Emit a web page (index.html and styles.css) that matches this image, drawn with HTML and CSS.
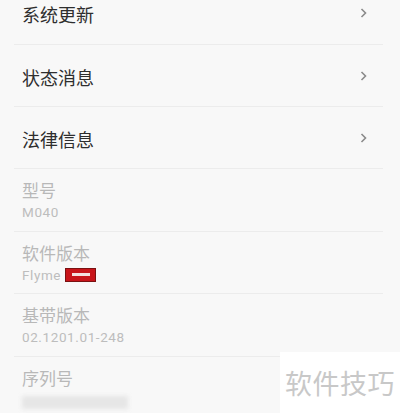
FILE: index.html
```html
<!DOCTYPE html>
<html lang="zh-CN">
<head>
<meta charset="utf-8">
<link rel="stylesheet" href="styles.css">
</head>
<body>
<div class="screen">
  <ul class="list">
    <li class="nav-row first"><span class="nav-title">系统更新</span><svg class="chev" width="7" height="10" viewBox="0 0 7 10"><path d="M1.5 1 L5.5 5 L1.5 9" fill="none" stroke="#8a8a8a" stroke-width="1.6"/></svg></li>
    <li class="nav-row"><span class="nav-title">状态消息</span><svg class="chev" width="7" height="10" viewBox="0 0 7 10"><path d="M1.5 1 L5.5 5 L1.5 9" fill="none" stroke="#8a8a8a" stroke-width="1.6"/></svg></li>
    <li class="nav-row"><span class="nav-title">法律信息</span><svg class="chev" width="7" height="10" viewBox="0 0 7 10"><path d="M1.5 1 L5.5 5 L1.5 9" fill="none" stroke="#8a8a8a" stroke-width="1.6"/></svg></li>
    <li class="info-row"><div class="info-title">型号</div><div class="info-value">M040</div></li>
    <li class="info-row"><div class="info-title">软件版本</div><div class="info-value">Flyme <span class="redact"><span class="redact-bar"></span></span></div></li>
    <li class="info-row"><div class="info-title">基带版本</div><div class="info-value">02.1201.01-248</div></li>
    <li class="info-row last"><div class="info-title">序列号</div><div class="info-value"><span class="blur"></span></div></li>
  </ul>
  <div class="watermark">软件技巧</div>
</div>
</body>
</html>
```
FILE: styles.css
```css
html, body {
  margin: 0;
  padding: 0;
  background: #f8f8f8;
}
.screen {
  position: relative;
  width: 400px;
  height: 413px;
  overflow: hidden;
  font-family: "Noto Sans CJK SC", "Noto Sans", Roboto, sans-serif;
}
.list {
  list-style: none;
  margin: 0;
  padding: 0 17px 0 14px;
}
.nav-row {
  display: flex;
  align-items: center;
  justify-content: space-between;
  height: 62px;
  padding: 0 16px 0 8px;
  border-bottom: 1px solid #ececec;
  box-sizing: border-box;
}
.nav-row.first {
  margin-top: -18px;
  height: 63px;
}
.nav-title {
  font-size: 18px;
  line-height: 24px;
  color: #2e2e2e;
  padding-top: 2px;
}
.chev {
  display: block;
}
.info-row {
  height: 62.5px;
  padding: 10px 0 0 8px;
  box-sizing: border-box;
  border-bottom: 1px solid #ececec;
}
.info-row.last {
  border-bottom: none;
}
.info-title {
  font-size: 17px;
  line-height: 22px;
  color: #b8b8b8;
}
.info-value {
  margin-top: 1px;
  font-family: Roboto, "Noto Sans", sans-serif;
  font-size: 13.5px;
  letter-spacing: 0.6px;
  line-height: 20px;
  color: #bdbdbd;
  display: flex;
  align-items: center;
  gap: 4px;
}
.redact {
  display: inline-flex;
  align-items: center;
  justify-content: center;
  width: 31px;
  height: 14px;
  background: #c8141a;
  border: 1px solid #7a1212;
  box-sizing: border-box;
}
.redact-bar {
  display: block;
  width: 18px;
  height: 3px;
  background: #f4dede;
}
.blur {
  display: block;
  width: 106px;
  height: 13px;
  margin-top: 6px;
  background: #e6e6e6;
  filter: blur(2px);
}
.watermark {
  position: absolute;
  left: 280px;
  top: 352px;
  width: 120px;
  height: 61px;
  background: #ffffff;
  box-sizing: border-box;
  padding: 14px 0 0 5px;
  font-size: 27px;
  line-height: 34px;
  color: #c8c8c8;
  letter-spacing: 0.5px;
}
```
